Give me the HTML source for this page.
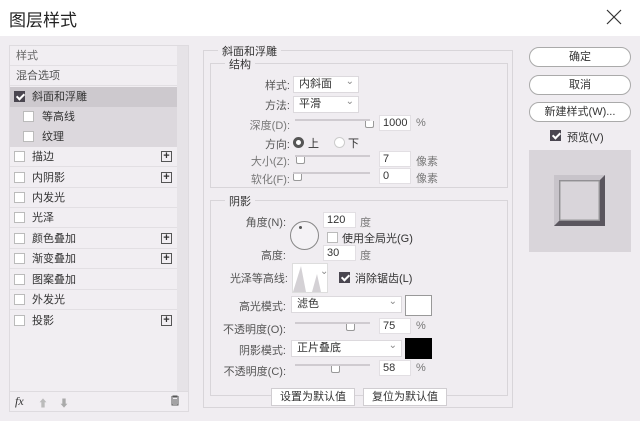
<!DOCTYPE html>
<html><head><meta charset="utf-8"><style>
*{margin:0;padding:0;box-sizing:border-box}
body{width:640px;height:421px;overflow:hidden;background:#f0edf1;font-family:"Liberation Sans","Noto Sans CJK SC",sans-serif;font-size:11px;color:#333;position:relative}
.a{position:absolute}
.title{left:0;top:0;width:640px;height:36px;background:#fff}
.row{position:absolute;left:10px;width:167px;height:20px;line-height:20px;border-bottom:1px solid #e2dfe3}
.cb{position:absolute;width:11px;height:11px;border:1px solid #bbb;background:#fff;top:4px}
.cbc{background:#4a4650;border-color:#4a4650}
.cbc:after{content:"";position:absolute;left:3px;top:0px;width:3px;height:6px;border:solid #fff;border-width:0 2px 2px 0;transform:rotate(45deg)}
.plus{position:absolute;left:151px;top:4px;width:11px;height:11px;border:1px solid #555;font-size:11px;line-height:9px;text-align:center;font-weight:bold;color:#333}
.box{position:absolute;border:1px solid #d8d5d9}
.lbl{position:absolute;text-align:right;color:#555}
.inp{position:absolute;background:#fff;border:1px solid #e2dfe3;height:16px;line-height:14px;padding-left:3px}
.sel{position:absolute;background:#fff;border:1px solid #dcd9dd;height:17px;line-height:15px;padding-left:5px}
.sel:after{content:"⌄";position:absolute;right:4px;top:-3px;color:#888;font-size:10px}
.track{position:absolute;height:2px;background:#cfcbd0}
.thumb{position:absolute;width:9px;height:7px;border:1px solid #999;border-top:none;background:#fff;border-radius:0 0 2px 2px}
.btn{position:absolute;left:529px;width:102px;height:20px;border:1px solid #aaa;border-radius:10px;background:#fff;text-align:center;line-height:18px;color:#333}
.bb{position:absolute;background:#fff;border:1px solid #d0cdd1;height:18px;line-height:16px;text-align:center}
</style></head><body>
<div class="a title"></div>
<div class="a" style="left:9px;top:6px;font-size:17px;color:#222">图层样式</div>
<svg class="a" style="left:605px;top:8px" width="18" height="18"><path d="M2 2L16 16M16 2L2 16" stroke="#333" stroke-width="1.2"/></svg>

<!-- left panel -->
<div class="a" style="left:9px;top:45px;width:180px;height:367px;border:1px solid #dedbdf;background:#f1eef2"></div>
<div class="a" style="left:177px;top:46px;width:11px;height:345px;background:#e6e3e7"></div>
<div class="row" style="top:46px;padding-left:6px;color:#666">样式</div>
<div class="row" style="top:66px;padding-left:6px;color:#555">混合选项</div>
<div class="row" style="top:87px;background:#cdc9ce;border:none"><span class="cb cbc" style="left:4px"></span><span style="position:absolute;left:22px">斜面和浮雕</span></div>
<div class="row" style="top:107px;background:#dcd8dd;border:none"><span class="cb" style="left:13px"></span><span style="position:absolute;left:32px">等高线</span></div>
<div class="row" style="top:127px;background:#dcd8dd;border:none"><span class="cb" style="left:13px"></span><span style="position:absolute;left:32px">纹理</span></div>
<div class="row" style="top:147px"><span class="cb" style="left:4px"></span><span style="position:absolute;left:22px">描边</span><span class="plus">+</span></div>
<div class="row" style="top:168px"><span class="cb" style="left:4px"></span><span style="position:absolute;left:22px">内阴影</span><span class="plus">+</span></div>
<div class="row" style="top:188px"><span class="cb" style="left:4px"></span><span style="position:absolute;left:22px">内发光</span></div>
<div class="row" style="top:208px"><span class="cb" style="left:4px"></span><span style="position:absolute;left:22px">光泽</span></div>
<div class="row" style="top:229px"><span class="cb" style="left:4px"></span><span style="position:absolute;left:22px">颜色叠加</span><span class="plus">+</span></div>
<div class="row" style="top:249px"><span class="cb" style="left:4px"></span><span style="position:absolute;left:22px">渐变叠加</span><span class="plus">+</span></div>
<div class="row" style="top:270px"><span class="cb" style="left:4px"></span><span style="position:absolute;left:22px">图案叠加</span></div>
<div class="row" style="top:290px"><span class="cb" style="left:4px"></span><span style="position:absolute;left:22px">外发光</span></div>
<div class="row" style="top:311px;border:none"><span class="cb" style="left:4px"></span><span style="position:absolute;left:22px">投影</span><span class="plus">+</span></div>
<div class="a" style="left:10px;top:391px;width:178px;height:1px;background:#dedbdf"></div>
<div class="a" style="left:15px;top:394px;font-style:italic;font-family:'Liberation Serif',serif;font-size:12px">fx</div>
<div class="a" style="left:38px;top:395px;color:#bbb;font-size:10px">⬆</div>
<div class="a" style="left:59px;top:395px;color:#aaa;font-size:10px">⬇</div>
<svg class="a" style="left:170px;top:395px" width="10" height="11"><path d="M1 2H9M3 2V1H7V2M2 3V10H8V3M4 4V9M6 4V9" stroke="#555" fill="none"/></svg>

<!-- right group -->
<div class="box" style="left:203px;top:50px;width:310px;height:358px"></div>
<div class="a" style="left:218px;top:43px;background:#f0edf1;padding:0 4px">斜面和浮雕</div>
<div class="box" style="left:210px;top:63px;width:298px;height:125px"></div>
<div class="a" style="left:225px;top:56px;background:#f0edf1;padding:0 4px">结构</div>
<div class="lbl" style="left:240px;top:77px;width:50px">样式:</div>
<div class="sel" style="left:293px;top:76px;width:66px">内斜面</div>
<div class="lbl" style="left:240px;top:97px;width:50px">方法:</div>
<div class="sel" style="left:293px;top:96px;width:66px">平滑</div>
<div class="lbl" style="left:230px;top:117px;width:60px;color:#777">深度(D):</div>
<div class="track" style="left:295px;top:119px;width:75px"></div>
<div class="thumb" style="left:365px;top:121px"></div>
<div class="inp" style="left:379px;top:115px;width:32px">1000</div>
<div class="a" style="left:416px;top:117px;color:#777">%</div>
<div class="lbl" style="left:240px;top:136px;width:50px">方向:</div>
<div class="a" style="left:293px;top:137px;width:11px;height:11px;border-radius:50%;border:3px solid #555;background:#fff"></div>
<div class="a" style="left:308px;top:135px">上</div>
<div class="a" style="left:334px;top:137px;width:11px;height:11px;border-radius:50%;border:1px solid #ccc;background:#fff"></div>
<div class="a" style="left:348px;top:135px">下</div>
<div class="lbl" style="left:230px;top:153px;width:60px;color:#777">大小(Z):</div>
<div class="track" style="left:295px;top:155px;width:75px"></div>
<div class="thumb" style="left:296px;top:157px"></div>
<div class="inp" style="left:379px;top:151px;width:32px">7</div>
<div class="a" style="left:416px;top:153px;color:#777">像素</div>
<div class="lbl" style="left:230px;top:171px;width:60px;color:#777">软化(F):</div>
<div class="track" style="left:293px;top:172px;width:77px"></div>
<div class="thumb" style="left:293px;top:174px"></div>
<div class="inp" style="left:379px;top:168px;width:32px">0</div>
<div class="a" style="left:416px;top:170px;color:#777">像素</div>

<div class="box" style="left:210px;top:200px;width:298px;height:196px"></div>
<div class="a" style="left:225px;top:193px;background:#f0edf1;padding:0 4px">阴影</div>
<div class="lbl" style="left:230px;top:214px;width:56px">角度(N):</div>
<div class="a" style="left:290px;top:221px;width:29px;height:29px;border-radius:50%;border:1px solid #888;background:#f4f2f5"></div>
<div class="a" style="left:299px;top:226px;width:3px;height:3px;border-radius:50%;background:#555"></div>
<div class="inp" style="left:323px;top:212px;width:33px">120</div>
<div class="a" style="left:360px;top:214px;color:#777">度</div>
<div class="cb a" style="left:327px;top:232px"></div>
<div class="a" style="left:342px;top:230px">使用全局光(G)</div>
<div class="lbl" style="left:240px;top:247px;width:46px">高度:</div>
<div class="inp" style="left:323px;top:245px;width:33px">30</div>
<div class="a" style="left:360px;top:247px;color:#777">度</div>
<div class="lbl" style="left:220px;top:270px;width:68px">光泽等高线:</div>
<div class="a" style="left:292px;top:263px;width:36px;height:30px;background:#fff;border:1px solid #ddd"></div>
<svg class="a" style="left:293px;top:264px" width="28" height="28"><path d="M0 28L8 2L13 28L19 28L24 10L28 28Z" fill="#d4d1d5"/></svg>
<div class="a" style="left:320px;top:266px;color:#888;font-size:10px">⌄</div>
<div class="cb cbc a" style="left:339px;top:272px"></div>
<div class="a" style="left:355px;top:270px">消除锯齿(L)</div>
<div class="lbl" style="left:230px;top:298px;width:56px">高光模式:</div>
<div class="sel" style="left:291px;top:296px;width:111px">滤色</div>
<div class="a" style="left:405px;top:295px;width:27px;height:21px;background:#fff;border:1px solid #999"></div>
<div class="lbl" style="left:210px;top:321px;width:76px">不透明度(O):</div>
<div class="track" style="left:295px;top:322px;width:75px"></div>
<div class="thumb" style="left:346px;top:324px"></div>
<div class="inp" style="left:379px;top:318px;width:32px">75</div>
<div class="a" style="left:416px;top:320px;color:#777">%</div>
<div class="lbl" style="left:230px;top:342px;width:56px">阴影模式:</div>
<div class="sel" style="left:291px;top:340px;width:111px">正片叠底</div>
<div class="a" style="left:405px;top:338px;width:27px;height:21px;background:#000"></div>
<div class="lbl" style="left:210px;top:363px;width:76px">不透明度(C):</div>
<div class="track" style="left:295px;top:364px;width:75px"></div>
<div class="thumb" style="left:331px;top:366px"></div>
<div class="inp" style="left:379px;top:360px;width:32px">58</div>
<div class="a" style="left:416px;top:362px;color:#777">%</div>
<div class="bb" style="left:271px;top:388px;width:84px">设置为默认值</div>
<div class="bb" style="left:363px;top:388px;width:84px">复位为默认值</div>

<!-- right buttons -->
<div class="btn" style="top:47px">确定</div>
<div class="btn" style="top:75px">取消</div>
<div class="btn" style="top:102px">新建样式(W)...</div>
<div class="cb cbc a" style="left:550px;top:130px"></div>
<div class="a" style="left:567px;top:129px">预览(V)</div>
<div class="a" style="left:529px;top:150px;width:102px;height:102px;background:#d9d5da"></div>
<svg class="a" style="left:554px;top:175px" width="52" height="52"><rect x="0" y="0" width="51" height="51" fill="#8c8890"/><path d="M0 0H51L46 5H5V46L0 51Z" fill="#c8c4ca"/><path d="M51 0V51H0L5 46H46V5Z" fill="#5a565e"/><rect x="6" y="6" width="39" height="39" fill="#d9d5da" stroke="#999"/></svg>
</body></html>
